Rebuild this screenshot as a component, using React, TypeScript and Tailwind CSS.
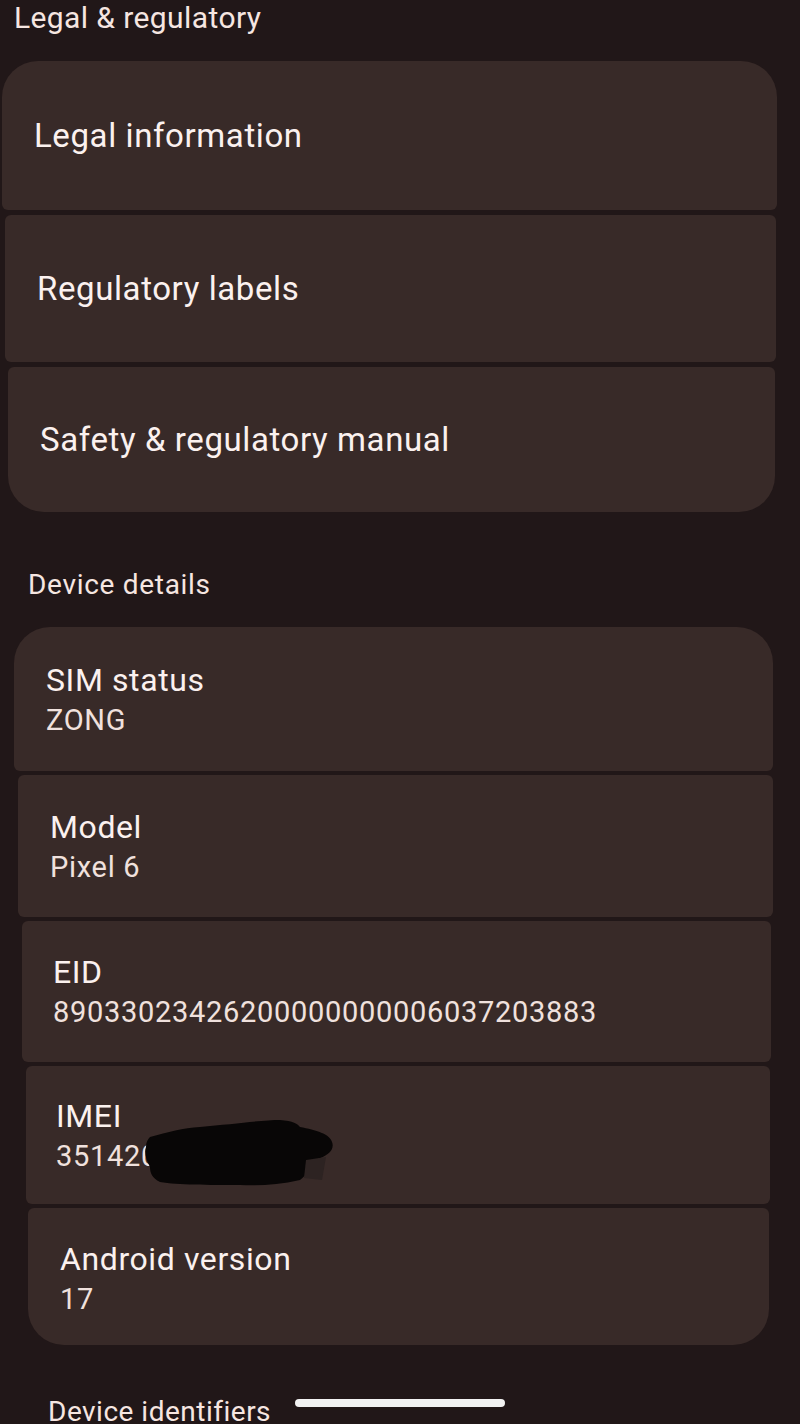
import React from 'react';

const font = { fontFamily: 'Roboto, "Noto Sans", sans-serif' };

function LinkCard({ label, className }: { label: string; className: string }) {
	return (
		<div className={`flex items-center bg-[#382a28] ${className}`}>
			<span className="text-[33px] leading-none text-[#fbf1ef] tracking-[0.6px]">{label}</span>
		</div>
	);
}

function InfoCard({ title, value, className, children }: { title: string; value: string; className: string; children?: React.ReactNode }) {
	return (
		<div className={`relative flex flex-col bg-[#382a28] ${className}`}>
			<span className="text-[32px] leading-[38px] text-[#fbf1ef] tracking-[0.6px]">{title}</span>
			<span className="mt-[2px] text-[29px] leading-[38px] text-[#f0e1dd] tracking-[0.7px]">{value}</span>
			{children}
		</div>
	);
}

export default function App() {
	return (
		<div className="relative w-[800px] h-[1424px] overflow-hidden bg-[#211718]" style={font}>
			{/* LEGAL */}
			<div className="h-[61px] pl-[14px] pt-[1px] text-[30px] leading-[34px] tracking-[0.4px] text-[#f6e6e1]">Legal &amp; regulatory</div>
			<div className="flex flex-col gap-[5px]">
				<LinkCard label="Legal information" className="ml-[2px] mr-[23px] h-[149px] pl-[32px] rounded-t-[36px] rounded-b-[6px]" />
				<LinkCard label="Regulatory labels" className="ml-[5px] mr-[24px] h-[147px] pl-[32px] rounded-[6px]" />
				<LinkCard label="Safety &amp; regulatory manual" className="ml-[8px] mr-[25px] h-[145px] pl-[32px] rounded-t-[6px] rounded-b-[36px]" />
			</div>

			{/* DEVICE DETAILS */}
			<div className="h-[115px] pl-[28px] pt-[56px] text-[28px] leading-[34px] tracking-[0.7px] text-[#f6e6e1]">Device details</div>
			<div className="flex flex-col gap-[4px]">
				<InfoCard title="SIM status" value="ZONG" className="ml-[14px] mr-[27px] h-[144px] pl-[32px] pt-[34px] rounded-t-[36px] rounded-b-[6px]" />
				<InfoCard title="Model" value="Pixel 6" className="ml-[18px] mr-[27px] h-[142px] pl-[32px] pt-[33px] rounded-[6px]" />
				<InfoCard title="EID" value="89033023426200000000006037203883" className="ml-[22px] mr-[29px] h-[141px] pl-[31px] pt-[32px] rounded-[6px]" />
				<InfoCard title="IMEI" value="3514200" className="ml-[26px] mr-[30px] h-[138px] pl-[30px] pt-[31px] rounded-[6px]">
					{/* redaction scribble */}
					<svg className="absolute left-[112px] top-[52px]" width="200" height="70" viewBox="0 0 200 70">
						<path
							d="M12 19 C30 14 45 10 62 9 C95 6 125 2 142 2 C155 3 160 6 162 9 C178 12 192 16 194 24 C197 32 190 38 177 42 C172 50 168 58 162 62 C140 67 120 68 102 67 C70 67 40 67 22 64 C14 60 12 55 12 49 C8 42 6 34 8 29 C8 24 10 21 12 19 Z"
							fill="#080606"
						/>
						<path d="M168 42 L188 39 L184 62 L166 60 Z" fill="#2d2322" />
					</svg>
				</InfoCard>
				<InfoCard title="Android version" value="17" className="ml-[28px] mr-[31px] h-[137px] pl-[32px] pt-[32px] rounded-t-[6px] rounded-b-[36px]" />
			</div>

			<div className="pl-[48px] pt-[50px] text-[28px] leading-[34px] tracking-[0.5px] text-[#f6e6e1]">Device identifiers</div>
			{/* home indicator */}
			<div className="absolute left-[295px] top-[1399px] h-[8px] w-[210px] rounded-full bg-[#f2f2f2]" />
		</div>
	);
}
